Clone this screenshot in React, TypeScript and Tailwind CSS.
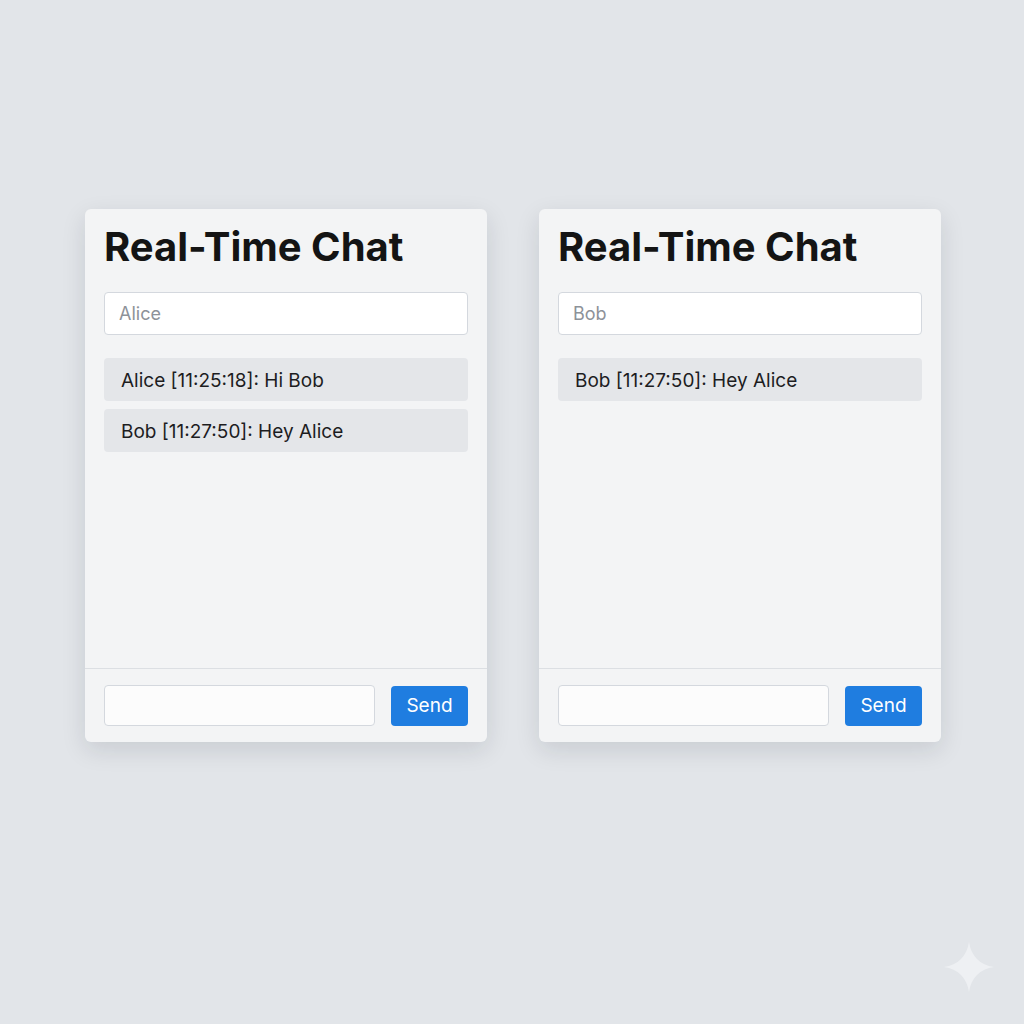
const PANELS = [
  {
    name: "Alice",
    messages: ["Alice [11:25:18]: Hi Bob", "Bob [11:27:50]: Hey Alice"],
  },
  {
    name: "Bob",
    messages: ["Bob [11:27:50]: Hey Alice"],
  },
];

function ChatPanel({ name, messages }: { name: string; messages: string[] }) {
  return (
    <div className="w-[402px] h-[533px] flex flex-col bg-[#f3f4f5] rounded-md shadow-[0_8px_24px_rgba(15,23,42,0.12)]">
      <div className="flex-1 flex flex-col px-[19px] pt-[14px]">
        <h1 className="text-[40px] leading-[48px] font-bold text-[#141414]">
          Real-Time Chat
        </h1>
        <input
          className="mt-[21px] h-[43px] w-full rounded border border-[#d4d8de] bg-white px-[14px] text-[18px] text-[#1f2937] placeholder:text-[#8d9299] outline-none"
          placeholder={name}
        />
        <div className="mt-[23px] flex flex-col gap-2">
          {messages.map((m) => (
            <div
              key={m}
              className="h-[43px] flex items-center rounded bg-[#e4e6e9] px-[17px] pt-[3px] text-[19px] text-[#1d1d1f]"
            >
              {m}
            </div>
          ))}
        </div>
      </div>
      <div className="border-t border-[#dcdfe3] px-[19px] pt-[16px] pb-[16px] flex items-center gap-4">
        <input className="h-[41px] min-w-0 flex-1 rounded border border-[#d4d8de] bg-[#fcfcfc] px-3 text-[18px] outline-none" />
        <button className="h-[40px] w-[77px] shrink-0 rounded bg-[#1f7de0] pt-[2px] text-[19px] text-white">
          Send
        </button>
      </div>
    </div>
  );
}

export default function App() {
  return (
    <div
      className="relative w-full h-[1024px] bg-[#e2e5e9] flex justify-center gap-[52px] pt-[209px] pl-[2px]"
      style={{ fontFamily: "Inter, 'Noto Sans', sans-serif" }}
    >
      {PANELS.map((p) => (
        <ChatPanel key={p.name} name={p.name} messages={p.messages} />
      ))}
      <svg
        className="absolute right-[30px] bottom-[32px]"
        width="50"
        height="50"
        viewBox="0 0 50 50"
      >
        <path
          d="M25 0 C27 14 36 23 50 25 C36 27 27 36 25 50 C23 36 14 27 0 25 C14 23 23 14 25 0 Z"
          fill="#eef0f3"
        />
      </svg>
    </div>
  );
}
